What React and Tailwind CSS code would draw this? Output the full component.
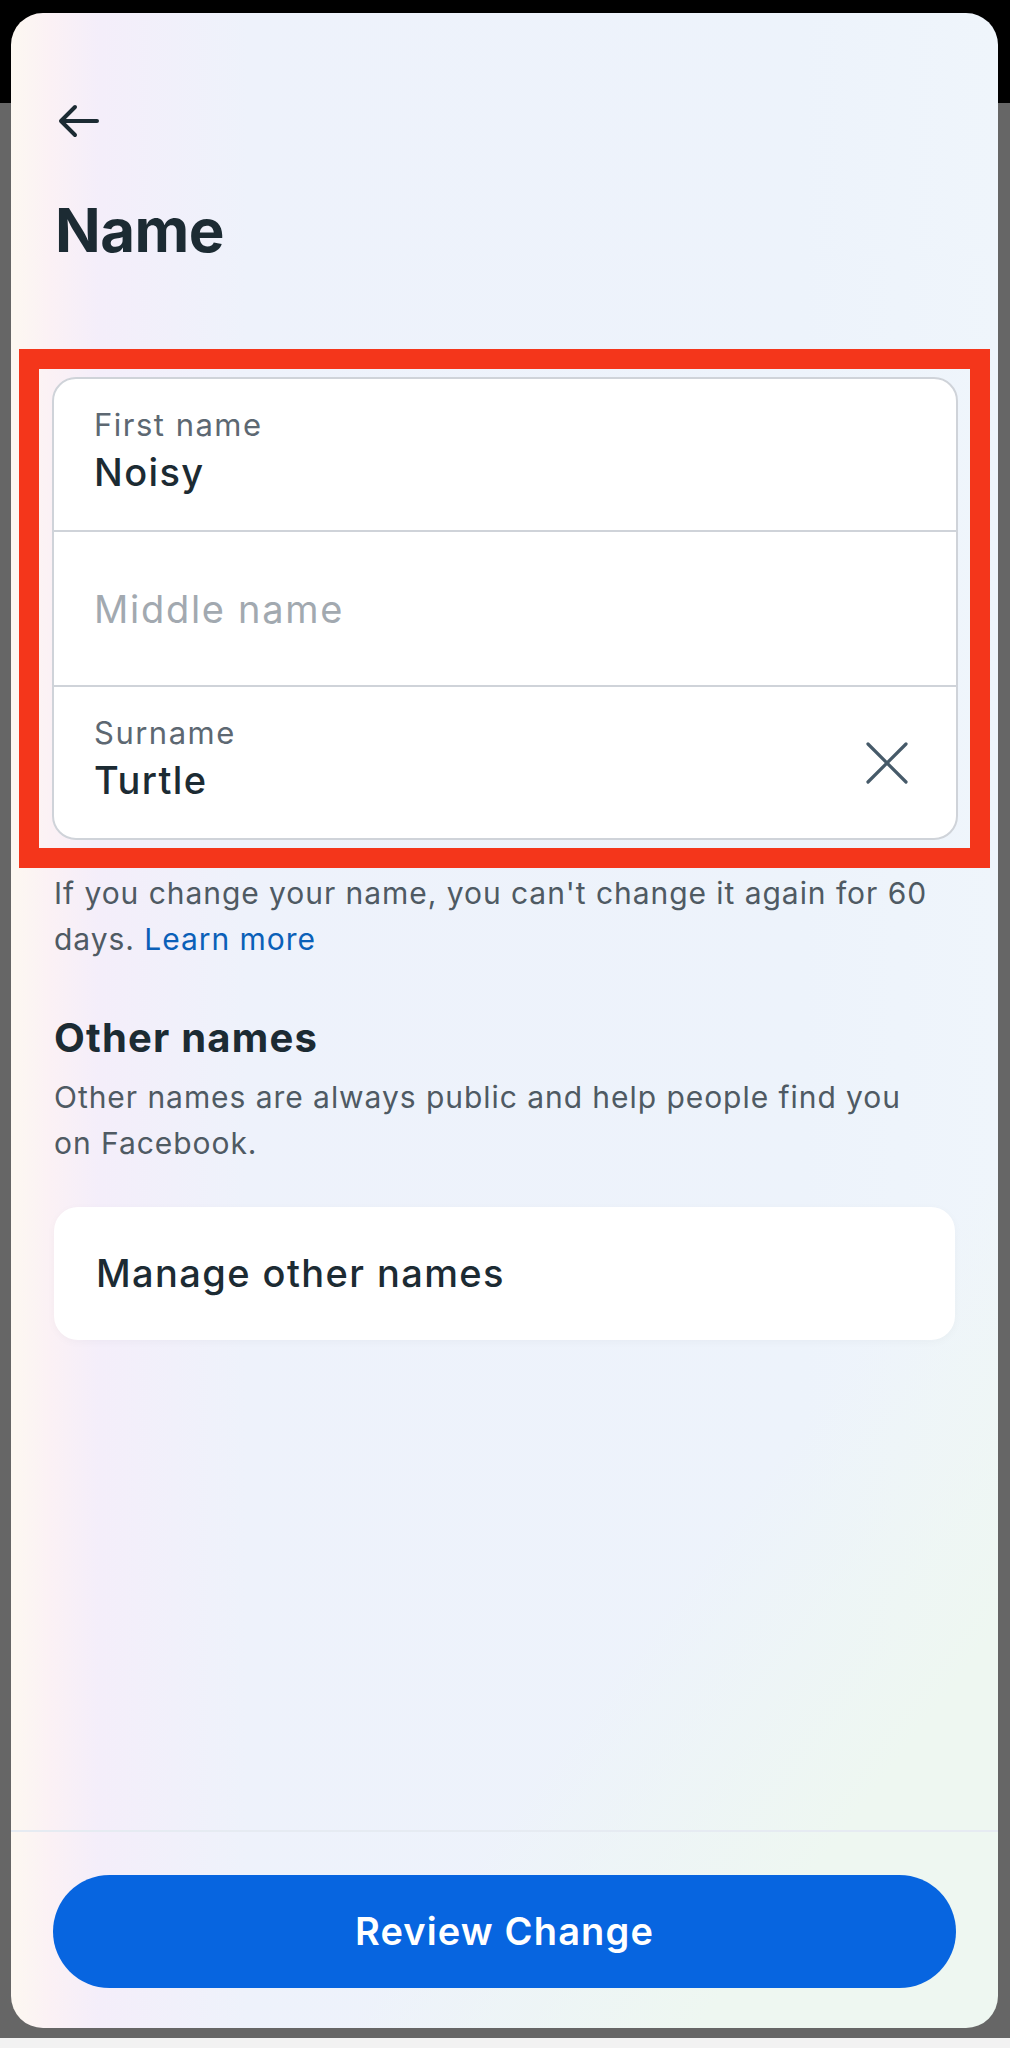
import React, { useState } from "react";

const font = { fontFamily: "Inter, 'Noto Sans', sans-serif" };

function BackArrow() {
  return (
    <svg width="44" height="36" viewBox="0 0 44 36" fill="none">
      <path
        d="M40 18H5M18 4L4 18l14 14"
        stroke="#1c2b33"
        strokeWidth="4"
        strokeLinecap="round"
        strokeLinejoin="round"
      />
    </svg>
  );
}

function ClearIcon() {
  return (
    <svg width="44" height="44" viewBox="0 0 44 44" fill="none">
      <path d="M3 3l38 38M41 3L3 41" stroke="#465a69" strokeWidth="3.2" strokeLinecap="round" />
    </svg>
  );
}

// one row of the name card
function Field({ label, value, placeholder, onClear, height, divider }) {
  return (
    <div className={`${height} flex items-center pl-[40px] pr-[47px] ${divider ? "border-b-2 border-[#cfd3d9]" : ""}`}>
      <div className="flex-1">
        {value ? (
          <div className="pb-[8px]">
            <div className="text-[31px] leading-[36px] tracking-[0.048em] text-[#5d6872]">{label}</div>
            <div className="mt-[6px] text-[38px] leading-[46px] tracking-[0.037em] font-medium text-[#1c2b33]">{value}</div>
          </div>
        ) : (
          <div className="text-[38px] leading-[46px] tracking-[0.045em] text-[#a2a9b0]">{placeholder}</div>
        )}
      </div>
      {onClear && (
        <button onClick={onClear}>
          <ClearIcon />
        </button>
      )}
    </div>
  );
}

export default function App() {
  const [surname, setSurname] = useState("Turtle");

  return (
    <div
      className="min-h-[2048px] pt-[13px] pl-[11px] pr-[12px] bg-[linear-gradient(to_bottom,#000_0px,#000_103px,#666666_103px,#666666_2038px,#f2f2f2_2038px)]"
      style={font}
    >
      <div className="h-[2015px] rounded-[32px] overflow-hidden flex flex-col bg-[linear-gradient(127deg,transparent_74%,#eef7f1_88%),linear-gradient(90deg,#fdf8f1_0%,#fbf1f5_4%,#f4eefa_9%,#eef2fb_24%,#edf3fb_80%,#eff5fb_100%)]">
        <div className="pl-[46px] pt-[90px]">
          <BackArrow />
        </div>

        <h1 className="pl-[44px] mt-[55px] text-[60px] leading-[72px] font-bold text-[#1c2b33] tracking-[-0.5px]">Name</h1>

        <div className="mx-[8px] mt-[83px] border-[20px] border-[#f4361b] pt-[8px] pl-[13px] pr-[12px] pb-[8px]">
          <div className="bg-white rounded-[24px] border-2 border-[#cfd3d9] overflow-hidden">
            <Field label="First name" value="Noisy" height="h-[153px]" divider />
            <Field placeholder="Middle name" height="h-[155px]" divider />
            <Field label="Surname" value={surname} placeholder="Surname" height="h-[151px]" onClear={() => setSurname("")} />
          </div>
        </div>

        <div className="px-[43px]">
          <p className="mt-[2px] max-w-[900px] text-[30px] leading-[46px] tracking-[0.95px] text-[#4f5a63]">
            If you change your name, you can't change it again for 60 days.{" "}
            <a href="#" className="text-[#0a60b8]">Learn more</a>
          </p>

          <h2 className="mt-[52px] text-[40px] leading-[48px] tracking-[0.03em] font-bold text-[#1c2b33]">Other names</h2>
          <p className="mt-[12px] text-[30px] leading-[46px] tracking-[0.95px] text-[#4f5a63]">
            Other names are always public and help people find you
            <br />
            on Facebook.
          </p>

          <div className="mt-[41px] h-[133px] bg-white rounded-[24px] flex items-center pl-[42px] shadow-[0_2px_10px_rgba(0,0,0,0.03)]">
            <span className="text-[38px] tracking-[0.037em] font-medium text-[#1c2b33]">Manage other names</span>
          </div>
        </div>

        <div className="flex-1" />

        <div className="border-t-2 border-[#e6ebf2] px-[42px] pt-[43px] pb-[40px]">
          <button className="w-full h-[113px] rounded-full bg-[#0765e0] text-white text-[38px] tracking-[0.03em] font-semibold">
            Review Change
          </button>
        </div>
      </div>
    </div>
  );
}
